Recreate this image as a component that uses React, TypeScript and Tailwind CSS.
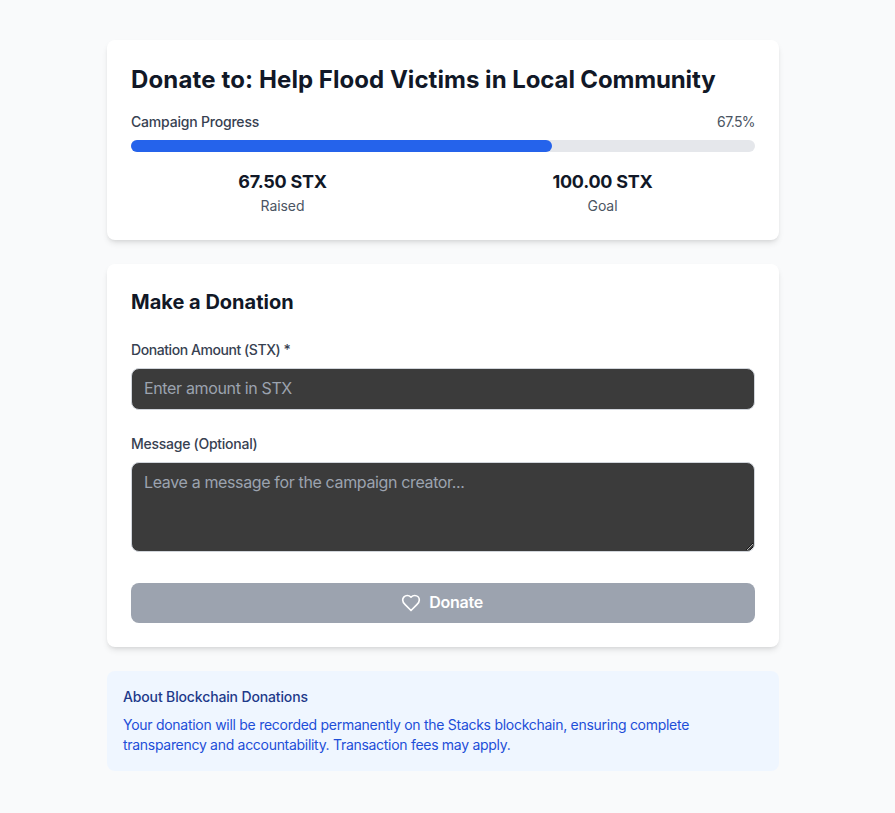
import type { ReactNode } from "react";

function Card({ children }: { children: ReactNode }) {
  return <section className="mb-6 rounded-lg bg-white p-6 shadow-md">{children}</section>;
}

function Stat({ value, label }: { value: string; label: string }) {
  return (
    <div className="pr-px text-center">
      <p className="text-lg font-bold tracking-[-0.25px] text-[#111827]">{value}</p>
      <p className="text-sm tracking-[-0.05px] text-[#4b5563]">{label}</p>
    </div>
  );
}

function HeartIcon() {
  return (
    <svg className="mr-2 h-5 w-5" viewBox="0 0 24 24" fill="none" stroke="currentColor" strokeWidth="2" strokeLinecap="round" strokeLinejoin="round">
      <path d="M19 14c1.49-1.46 3-3.21 3-5.5A5.5 5.5 0 0 0 16.5 3c-1.76 0-3 .5-4.5 2-1.5-1.5-2.74-2-4.5-2A5.5 5.5 0 0 0 2 8.5c0 2.3 1.5 4.05 3 5.5l7 7Z" />
    </svg>
  );
}

export default function App() {
  return (
    <div className="min-h-screen bg-[#f9fafb] pl-[107px] pt-10 font-['Inter',sans-serif]">
      <main className="w-[672px]">
        <Card>
          <h1 className="mb-4 whitespace-nowrap text-2xl font-bold tracking-[-0.05px] text-[#111827]"><span className="tracking-[0.15px]">Donate to: </span><span className="tracking-[0.04px]">Help Flood Victims in </span><span className="tracking-[-0.14px]">Local Community</span></h1>
          <div className="mb-2 flex justify-between text-sm">
            <span className="font-medium tracking-[-0.2px] text-[#374151]">Campaign Progress</span>
            <span className="tracking-[-0.6px] text-[#4b5563]">67.5%</span>
          </div>
          <div className="h-3 rounded-full bg-[#e5e7eb]">
            <div className="h-3 w-[67.5%] rounded-full bg-[#2563eb]" />
          </div>
          <div className="mt-4 grid grid-cols-2 gap-4">
            <Stat value="67.50 STX" label="Raised" />
            <Stat value="100.00 STX" label="Goal" />
          </div>
        </Card>
        <Card>
          <h2 className="mb-6 text-xl font-bold text-[#111827]">Make a Donation</h2>
          <form className="flex flex-col gap-6">
            <div>
              <label htmlFor="amount" className="mb-2 block text-sm font-medium tracking-[-0.43px] text-[#374151]">Donation Amount (STX) *</label>
              <input id="amount" className="block w-full rounded-lg border border-[#d1d5db] bg-[#3b3b3b] px-3 pt-[7px] pb-[9px] tracking-[-0.35px] placeholder:text-[#9ca3af]" placeholder="Enter amount in STX" />
            </div>
            <div>
              <label htmlFor="message" className="mb-2 block text-sm font-medium tracking-[-0.26px] text-[#374151]">Message (Optional)</label>
              <textarea id="message" rows={3} className="block w-full rounded-lg border border-[#d1d5db] bg-[#3b3b3b] px-3 pt-[7px] pb-[9px] tracking-[-0.36px] placeholder:text-[#9ca3af]" placeholder="Leave a message for the campaign creator..." />
            </div>
            <button type="button" className="mt-[7px] flex h-10 items-center justify-center rounded-lg bg-[#9ca3af] pr-0.5 font-semibold tracking-[-0.25px] text-white"><HeartIcon /><span className="pb-0.5">Donate</span></button>
          </form>
        </Card>
        <div className="rounded-lg bg-[#eff6ff] p-4">
          <h3 className="mb-2 text-sm font-medium tracking-[-0.14px] text-[#1e3a8a]">About Blockchain Donations</h3>
          <p className="text-sm tracking-[-0.275px] text-[#1d4ed8]">Your donation will be recorded permanently on the Stacks blockchain, ensuring complete <span className="tracking-[-0.295px]">transparency and accountability. Transaction fees may apply.</span></p>
        </div>
      </main>
    </div>
  );
}
